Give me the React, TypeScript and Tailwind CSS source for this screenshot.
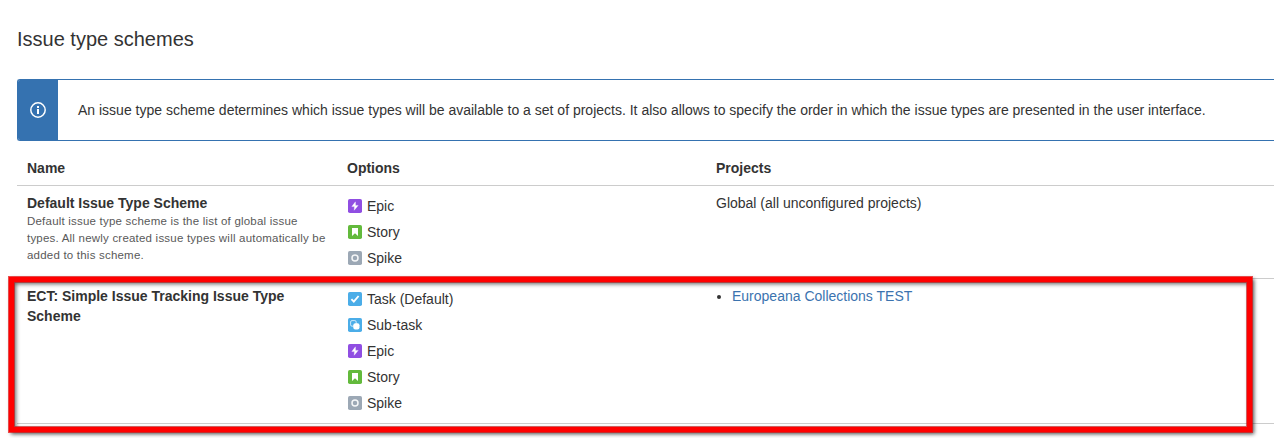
import React from "react";

type IssueKind = "epic" | "story" | "spike" | "task" | "subtask";

const iconColor: Record<IssueKind, string> = {
  epic: "#904ee2",
  story: "#63ba3c",
  spike: "#9ca8b5",
  task: "#4bade8",
  subtask: "#4bade8",
};

function IssueIcon({ kind }: { kind: IssueKind }) {
  return (
    <svg width="14" height="14" viewBox="0 0 14 14" className="ml-px shrink-0">
      <rect width="14" height="14" rx="1.75" fill={iconColor[kind]} />
      {kind === "epic" && <path d="M7.4 2.8 3.8 7.6h2.6l-.2 3.7L10.2 6.4H7.6z" fill="#fff" stroke="#fff" strokeWidth=".3" strokeLinejoin="round" />}
      {kind === "story" && <path d="M4 3h6v8L7 8.2 4 11z" fill="#fff" />}
      {kind === "spike" && <circle cx="7" cy="7" r="3" fill="none" stroke="#fff" strokeOpacity=".9" strokeWidth="1.5" />}
      {kind === "task" && <path d="m3.4 7.2 2.4 2.4 4.8-5.6" fill="none" stroke="#fff" strokeWidth="1.9" />}
      {kind === "subtask" && (
        <>
          <rect x="2.6" y="2.6" width="5.6" height="5.6" rx="1.4" fill="none" stroke="#fff" strokeOpacity=".7" strokeWidth="1" />
          <rect x="5.3" y="5.3" width="6.2" height="6.2" rx="2" fill="#fff" />
        </>
      )}
    </svg>
  );
}

function Options({ items }: { items: { kind: IssueKind; label: string }[] }) {
  return (
    <ul>
      {items.map((item) => (
        <li key={item.label} className="flex h-[26px] items-center gap-[5px]">
          <IssueIcon kind={item.kind} />
          <span>{item.label}</span>
        </li>
      ))}
    </ul>
  );
}

const columns = "grid grid-cols-[320px_369px_1fr] border-b border-[#ccc] pl-2.5";

export default function App() {
  return (
    <main
      className="relative h-[438px] overflow-hidden bg-white pl-[17px] text-sm leading-5 text-[#333]"
      style={{ fontFamily: '"Liberation Sans", Arial, sans-serif' }}
    >
      <h1 className="pt-6 text-xl leading-[30px]">Issue type schemes</h1>

      <section className="mt-[25px] flex h-[62px] overflow-hidden rounded-l-[3px] border-y border-l border-[#3572b0]">
        <div className="flex w-10 shrink-0 items-center justify-center bg-[#3572b0]">
          <svg width="16" height="16" viewBox="0 0 16 16">
            <circle cx="8" cy="8" r="7.2" fill="none" stroke="#fff" strokeWidth="1.5" />
            <path d="M7 4h2v2H7zM7 7h2v5H7z" fill="#fff" />
          </svg>
        </div>
        <p className="self-center pl-5">
          An issue type scheme determines which issue types will be available to a set of projects. It also allows to
          specify the order in which the issue types are presented in the user interface.
        </p>
      </section>

      <div className={columns + " h-[45px] pt-[17px] font-bold"}>
        <span>Name</span>
        <span>Options</span>
        <span>Projects</span>
      </div>

      <div className={columns + " h-[93px] pt-[7px]"}>
        <div>
          <strong className="block">Default Issue Type Scheme</strong>
          <p className="w-[302px] text-[11.5px] leading-[17px] tracking-[0.21px] text-[#595959]">
            Default issue type scheme is the list of global issue types. All newly created issue types will
            automatically be added to this scheme.
          </p>
        </div>
        <Options
          items={[
            { kind: "epic", label: "Epic" },
            { kind: "story", label: "Story" },
            { kind: "spike", label: "Spike" },
          ]}
        />
        <span>Global (all unconfigured projects)</span>
      </div>

      <div className={columns + " h-[145px] pt-[7px]"}>
        <strong className="w-[300px]">ECT: Simple Issue Tracking Issue Type Scheme</strong>
        <Options
          items={[
            { kind: "task", label: "Task (Default)" },
            { kind: "subtask", label: "Sub-task" },
            { kind: "epic", label: "Epic" },
            { kind: "story", label: "Story" },
            { kind: "spike", label: "Spike" },
          ]}
        />
        <ul className="list-disc pl-4">
          <li>
            <a href="#" className="text-[#3b73af]">Europeana Collections TEST</a>
          </li>
        </ul>
      </div>

      <div className="pointer-events-none absolute left-[9px] top-[277px] h-[155px] w-[1243px] border-[5px] border-[#f00] shadow-[0_0_0_1px_rgba(225,20,20,0.75),2px_2px_4px_rgba(0,0,0,0.7),inset_0_0_0_1px_rgba(190,20,20,0.65),inset_2px_2px_4px_rgba(0,0,0,0.6)]" />
    </main>
  );
}
